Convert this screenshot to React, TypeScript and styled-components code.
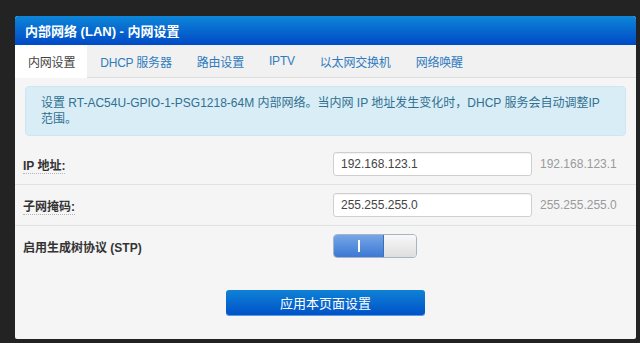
import React from 'react';
import styled, { createGlobalStyle } from 'styled-components';

const GlobalStyle = createGlobalStyle`
  html, body {
    margin: 0;
    padding: 0;
    background: #232323;
  }
  body {
    font-family: "Liberation Sans", "Noto Sans CJK SC", sans-serif;
    width: 640px;
    height: 343px;
    overflow: hidden;
  }
`;

const Page = styled.div`
  padding: 16px 4px 4px 15px;
`;

const Panel = styled.div`
  width: 621px;
  height: 323px;
  background: #f5f5f5;
  border-radius: 3px 3px 2px 2px;
  overflow: hidden;
  display: flex;
  flex-flow: column;
`;

const Header = styled.div`
  height: 29px;
  display: flex;
  align-items: center;
  padding-left: 10px;
  background: linear-gradient(#0e86d8, #0049c6);
  color: #ffffff;
  font-size: 13px;
  font-weight: bold;
`;

const Tabs = styled.div`
  display: flex;
  height: 32px;
  background: #f1f1f1;
  border-bottom: 1px solid #dddddd;
`;

const Tab = styled.div<{ active?: boolean }>`
  display: flex;
  align-items: center;
  padding: 0 12px 0 13px;
  font-size: 12px;
  letter-spacing: -0.2px;
  color: ${(p) => (p.active ? '#444444' : '#2f7bbd')};
  background: ${(p) => (p.active ? '#ffffff' : 'transparent')};
  margin-bottom: ${(p) => (p.active ? '-1px' : '0')};
`;

const Alert = styled.div`
  margin: 8px 10px 8px 10px;
  padding: 8px 15px;
  background: #d9edf7;
  border: 1px solid #cde6f1;
  border-radius: 4px;
  color: #31708f;
  font-size: 12px;
  line-height: 16px;
`;

const Row = styled.div<{ last?: boolean }>`
  display: grid;
  grid-template-columns: 302px 199px auto;
  align-items: center;
  column-gap: 8px;
  padding: 8px 0 8px 8px;
  border-bottom: ${(p) => (p.last ? 'none' : '1px solid #e2e2e2')};
`;

const Label = styled.div`
  font-size: 12px;
  font-weight: bold;
  color: #333333;
`;

const Hinted = styled.span`
  border-bottom: 1px dotted #b5b5b5;
`;

const Input = styled.input`
  box-sizing: border-box;
  width: 199px;
  height: 24px;
  padding: 0 7px;
  border: 1px solid #cfcfcf;
  border-radius: 3px;
  background: #ffffff;
  box-shadow: inset 0 1px 1px rgba(0, 0, 0, 0.06);
  font-family: "Liberation Sans", sans-serif;
  font-size: 12px;
  color: #444444;
  outline: none;
`;

const Hint = styled.span`
  font-size: 12px;
  color: #9a9a9a;
`;

const Toggle = styled.div`
  display: flex;
  width: 84px;
  height: 24px;
  box-sizing: border-box;
  border: 1px solid #a8b4c4;
  border-radius: 4px;
  overflow: hidden;
`;

const ToggleOn = styled.div`
  width: 49px;
  display: flex;
  align-items: center;
  justify-content: center;
  background: linear-gradient(#76a6e6, #3c78d4);
  border-right: 1px solid #3b6fb8;
`;

const ToggleBar = styled.div`
  width: 2px;
  height: 12px;
  background: #ffffff;
`;

const ToggleOff = styled.div`
  flex: 1;
  background: linear-gradient(#f8f8f8, #dedede);
`;

const Actions = styled.div`
  display: flex;
  justify-content: center;
  padding-top: 24px;
`;

const Button = styled.button`
  width: 199px;
  height: 25px;
  border: none;
  border-radius: 3px;
  background: linear-gradient(#0f82d6, #0052c8);
  box-shadow: 0 1px 0 #5b9be0;
  color: #ffffff;
  font-family: "Liberation Sans", "Noto Sans CJK SC", sans-serif;
  font-size: 13px;
  cursor: pointer;
`;

const tabs = ['内网设置', 'DHCP 服务器', '路由设置', 'IPTV', '以太网交换机', '网络唤醒'];

const App: React.FC = () => (
  <>
    <GlobalStyle />
    <Page>
      <Panel>
        <Header>内部网络 (LAN) - 内网设置</Header>
        <Tabs>
          {tabs.map((t, i) => (
            <Tab key={t} active={i === 0}>{t}</Tab>
          ))}
        </Tabs>
        <Alert>
          设置 RT-AC54U-GPIO-1-PSG1218-64M 内部网络。当内网 IP 地址发生变化时，DHCP 服务会自动调整IP
          范围。
        </Alert>
        <Row>
          <Label><Hinted>IP 地址:</Hinted></Label>
          <Input defaultValue="192.168.123.1" />
          <Hint>192.168.123.1</Hint>
        </Row>
        <Row>
          <Label><Hinted>子网掩码:</Hinted></Label>
          <Input defaultValue="255.255.255.0" />
          <Hint>255.255.255.0</Hint>
        </Row>
        <Row last>
          <Label>启用生成树协议 (STP)</Label>
          <Toggle>
            <ToggleOn><ToggleBar /></ToggleOn>
            <ToggleOff />
          </Toggle>
        </Row>
        <Actions>
          <Button>应用本页面设置</Button>
        </Actions>
      </Panel>
    </Page>
  </>
);

export default App;
